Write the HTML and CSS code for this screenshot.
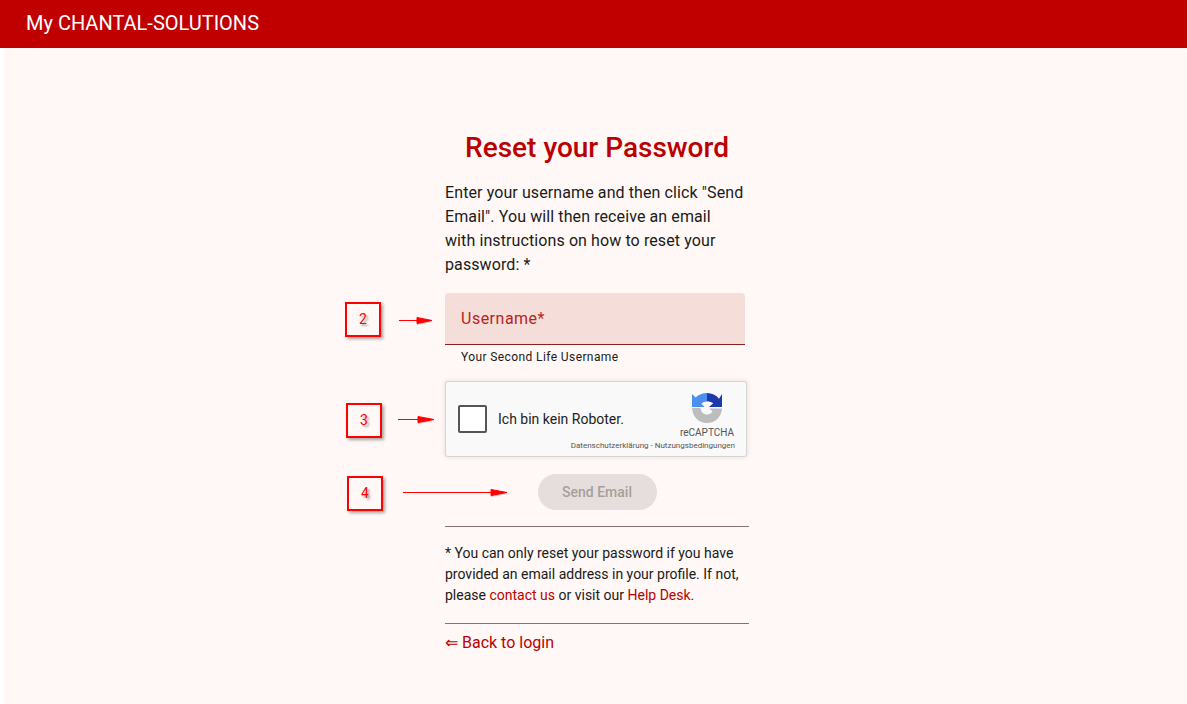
FILE: index.html
```html
<!DOCTYPE html>
<html lang="en">
<head>
<meta charset="utf-8">
<title>Reset your Password</title>
<link rel="stylesheet" href="styles.css">
</head>
<body>
<header class="topbar">My CHANTAL-SOLUTIONS</header>
<main class="page">
  <section class="panel">
    <h1 class="title">Reset your Password</h1>
    <p class="intro">Enter your username and then click "Send Email". You will then receive an email with instructions on how to reset your password: *</p>
    <div class="field"><span class="field-label">Username*</span></div>
    <div class="hint">Your Second Life Username</div>
    <div class="captcha">
      <span class="captcha-box"></span>
      <span class="captcha-text">Ich bin kein Roboter.</span>
      <div class="captcha-brand">
        <svg class="captcha-logo" width="32" height="32" viewBox="0 0 32 32">
          <path fill="#4a90f0" d="M1 15 V2 l3.6 3.6 C7.6 2.6 11.5 1 16 1 V9.5 C13.6 9.5 11.8 10.4 10.4 11.8 L13.6 15 Z"/>
          <path fill="#1c3aa9" d="M16 1 C21 1 25.2 3.2 28 6.8 L31 2 V15 H18 L22.2 11.2 C20.8 10 18.8 9.5 16 9.5 Z"/>
          <path fill="#bdbdbd" d="M1 16 H9.5 C10 20 12.6 22.5 16 22.5 C18.4 22.5 20.4 21.4 21.5 19.6 L18.5 16.5 H31 C30.6 25 24 31 16 31 C8 31 1.6 25 1 16 Z"/>
          <path fill="#f9f9f9" d="M13 12 L17 9.5 L20 11 L18.5 13.5 L15.5 14 Z"/>
        </svg>
        <span class="captcha-name">reCAPTCHA</span>
      </div>
      <span class="captcha-legal">Datenschutzerklärung - Nutzungsbedingungen</span>
    </div>
    <div class="actions"><button class="send" type="button" disabled>Send Email</button></div>
    <hr class="rule">
    <p class="note">* You can only reset your password if you have provided an email address in your profile. If not, please <a href="#">contact us</a> or visit our <a href="#">Help Desk</a>.</p>
    <hr class="rule rule-low">
    <a class="back" href="#">⇐ Back to login</a>
  </section>
</main>

<div class="mark mark-2">2</div>
<div class="mark mark-3">3</div>
<div class="mark mark-4">4</div>
<svg class="arrows" width="1187" height="704" viewBox="0 0 1187 704">
  <g class="arrow-shadow">
    <path d="M399 322h18v-3l15 3l-15 3v-3z"/>
    <path d="M398 421h20v-3l16 3l-16 3v-3z"/>
    <path d="M403 494h88v-3l16 3l-16 3v-3z"/>
  </g>
  <g class="arrow-line">
    <path d="M399 320.500h18v-3l15 3l-15 3v-3z"/>
    <path d="M398 419.500h20v-3l16 3l-16 3v-3z"/>
    <path d="M403 492.500h88v-3l16 3l-16 3v-3z"/>
  </g>
</svg>
</body>
</html>
```

FILE: styles.css
```css
* { box-sizing: border-box; }
html, body { margin: 0; height: 100%; }
body {
  position: relative;
  overflow: hidden;
  background: #fff;
  color: #201a19;
  font-family: Roboto, "Liberation Sans", sans-serif;
}
.topbar {
  height: 48px;
  padding: 0 26px;
  background: #c00000;
  color: #fff;
  font-size: 20px;
  line-height: 46px;
}
.page {
  display: flex;
  justify-content: center;
  height: 656px;
  margin-left: 3px;
  padding: 82px 0 0 4px;
  background: #fff8f6;
}
.panel { width: 304px; }
.title {
  margin: 0;
  color: #bb0000;
  font-size: 28px;
  font-weight: 500;
  line-height: 36px;
  text-align: center;
}
.intro {
  width: 300px;
  margin: 15px 0 0;
  font-size: 16px;
  line-height: 24px;
  letter-spacing: 0.1px;
}
.field {
  width: 300px;
  height: 52px;
  margin-top: 16px;
  padding: 0 16px;
  background: #f5ddd9;
  border-bottom: 1px solid #8f2020;
  border-radius: 4px 4px 0 0;
  color: #b3261e;
  font-size: 16px;
  line-height: 52px;
  letter-spacing: 0.5px;
}
.hint {
  padding: 4px 16px 0;
  font-size: 12px;
  line-height: 16px;
  letter-spacing: 0.4px;
}
.captcha {
  position: relative;
  display: flex;
  align-items: center;
  width: 302px;
  height: 76px;
  margin-top: 16px;
  padding: 0 12px 0 12px;
  background: #f9f9f9;
  border: 1px solid #d3d3d3;
  border-radius: 3px;
  box-shadow: 0 0 4px 1px rgba(0, 0, 0, 0.08);
}
.captcha-box {
  width: 29px;
  height: 28px;
  background: #fff;
  border: 2px solid #555;
  border-radius: 2px;
}
.captcha-text {
  margin-left: 11px;
  color: #222;
  font-size: 14px;
}
.captcha-brand {
  display: flex;
  flex-direction: column;
  align-items: center;
  margin-left: auto;
  padding-bottom: 8px;
}
.captcha-logo { display: block; margin-left: 0; }
.captcha-name {
  margin-top: 3px;
  color: #555;
  font-size: 10px;
  line-height: 12px;
}
.captcha-legal {
  position: absolute;
  right: 11px;
  bottom: 5px;
  color: #555;
  font-size: 8px;
  line-height: 10px;
}
.actions {
  display: flex;
  justify-content: center;
  width: 304px;
  margin-top: 17px;
}
.send {
  width: 119px;
  height: 36px;
  padding: 0;
  background: #e6dedc;
  border: 0;
  border-radius: 18px;
  color: #a69e9c;
  font: 500 14px/36px Roboto, "Liberation Sans", sans-serif;
}
.rule {
  width: 304px;
  margin: 16px 0 0;
  border: 0;
  border-top: 1px solid #857371;
}
.note {
  margin: 16px 0 0;
  font-size: 14px;
  line-height: 21px;
}
.note a, .back { color: #bb0000; text-decoration: none; }
.rule-low { margin-top: 17px; }
.back {
  display: block;
  margin-top: 9px;
  font-size: 16px;
  line-height: 20px;
}

/* Hand-drawn annotations lying over the page */
.mark {
  position: absolute;
  width: 36px;
  height: 35px;
  border: 2px solid #f00;
  box-shadow: 2px 2px 3px rgba(0, 0, 0, 0.35);
  color: #f00;
  font-size: 14px;
  line-height: 31px;
  text-align: center;
  text-shadow: 2px 2px 2px rgba(0, 0, 0, 0.35);
}
.mark-2 { left: 345px; top: 302px; }
.mark-3 { left: 346px; top: 403px; }
.mark-4 { left: 347px; top: 476px; }
.arrows { position: absolute; left: 0; top: 0; pointer-events: none; }
.arrow-line path { fill: #f00; stroke: #f00; stroke-width: 1; }
.arrow-shadow path { fill: rgba(0, 0, 0, 0.2); stroke: none; }
```
